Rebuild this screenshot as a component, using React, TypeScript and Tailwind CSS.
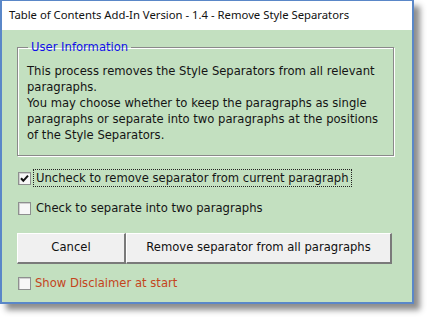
import React from 'react';

const FONT = { fontFamily: '"DejaVu Sans", Verdana, sans-serif' };
const TITLE_FONT = { fontFamily: '"Noto Sans", "Open Sans", sans-serif' };

const Checkbox: React.FC<{ checked?: boolean }> = ({ checked }) => (
  <span className="flex h-[13px] w-[13px] shrink-0 items-center justify-center border border-[#8e8f8f] bg-[#f7f7f7] shadow-[inset_1px_1px_0_#cfcfcf]">
    {checked && (
      <svg width="9" height="9" viewBox="0 0 9 9">
        <path d="M1 4.3 L3.3 6.8 L8 1.6" fill="none" stroke="#111" strokeWidth="2" />
      </svg>
    )}
  </span>
);

const Button: React.FC<{ label: string; className?: string }> = ({ label, className }) => (
  <button
    className={`h-[31px] border-t border-l border-t-white border-l-white border-r-2 border-b-2 border-r-[#7a7a7a] border-b-[#7a7a7a] bg-[#f0f0f0] text-[11.6px] text-[#111] ${className ?? ''}`}
  >
    {label}
  </button>
);

export default function App() {
  return (
    <div className="h-[319px] w-[429px] bg-white" style={FONT}>
      <div className="flex h-[304px] w-[414px] flex-col border-2 border-t border-[#5a87c8] bg-white shadow-[6px_6px_6px_rgba(0,0,0,0.45)]">
        <div className="flex h-[29px] items-center pl-[7px] text-[11.3px] text-[#111]" style={TITLE_FONT}>
          Table of Contents Add-In Version - 1.4 - Remove Style Separators
        </div>
        <div className="flex flex-1 flex-col bg-[#c3e0c0] pl-[15px] pr-[18px] pt-[10px] text-[11.6px] text-[#141414]">
          <fieldset className="border border-[#8a8a8a] pl-[9px] pr-[4px] pb-[12px] pt-[9px] shadow-[1px_1px_0_#fff,inset_1px_1px_0_#fff]">
            <legend className="ml-[1px] px-[3px] leading-[14px] text-[#1010e8]">User Information</legend>
            <div className="leading-[16px] whitespace-nowrap">
              This process removes the Style Separators from all relevant<br />
              paragraphs.<br />
              You may choose whether to keep the paragraphs as single<br />
              paragraphs or separate into two paragraphs at the positions<br />
              of the Style Separators.
            </div>
          </fieldset>

          <div className="mt-[13px] flex items-center gap-[2px] pl-[1px]">
            <Checkbox checked />
            <span className="border border-dotted border-[#222] px-[2px] leading-[16px]">
              Uncheck to remove separator from current paragraph
            </span>
          </div>

          <div className="mt-[13px] flex items-center gap-[5px] pl-[1px]">
            <Checkbox />
            <span className="leading-[16px]">Check to separate into two paragraphs</span>
          </div>

          <div className="mt-[17px] flex">
            <Button label="Cancel" className="w-[109px]" />
            <Button label="Remove separator from all paragraphs" className="w-[266px]" />
          </div>

          <div className="mt-[11px] flex items-center gap-[4px] pl-[1px]">
            <Checkbox />
            <span className="leading-[16px] text-[#c4441c]">Show Disclaimer at start</span>
          </div>
        </div>
      </div>
    </div>
  );
}
